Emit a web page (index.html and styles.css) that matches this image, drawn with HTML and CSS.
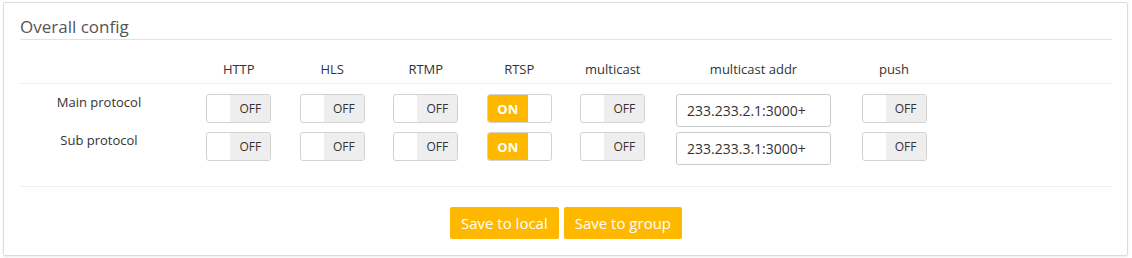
FILE: index.html
```
<html lang="en">
<head>
    <meta charset="UTF-8">
    <title>Overall config</title>
    <link rel="stylesheet" href="styles.css">
</head>
<body>

	<section class="panel">
		<h2 class="title">Overall config</h2>

		<div class="grid head">
			<span></span>
			<span>HTTP</span>
			<span>HLS</span>
			<span>RTMP</span>
			<span>RTSP</span>
			<span>multicast</span>
			<span>multicast addr</span>
			<span>push</span>
		</div>

		<div class="rows">
			<div class="grid row">
				<span class="label">Main protocol</span>
				<span class="switch"><i></i><em>OFF</em></span>
				<span class="switch"><i></i><em>OFF</em></span>
				<span class="switch"><i></i><em>OFF</em></span>
				<span class="switch on"><em>ON</em><i></i></span>
				<span class="switch"><i></i><em>OFF</em></span>
				<input class="addr" type="text" value="233.233.2.1:3000+">
				<span class="switch"><i></i><em>OFF</em></span>
			</div>
			<div class="grid row">
				<span class="label">Sub protocol</span>
				<span class="switch"><i></i><em>OFF</em></span>
				<span class="switch"><i></i><em>OFF</em></span>
				<span class="switch"><i></i><em>OFF</em></span>
				<span class="switch on"><em>ON</em><i></i></span>
				<span class="switch"><i></i><em>OFF</em></span>
				<input class="addr" type="text" value="233.233.3.1:3000+">
				<span class="switch"><i></i><em>OFF</em></span>
			</div>
		</div>

		<div class="actions">
			<button class="btn">Save to local</button>
			<button class="btn">Save to group</button>
		</div>
	</section>

</body>
</html>
```

FILE: styles.css
```
html,body {
	margin:0;
	padding:0;
	background:#fff;
	font-family:"Open Sans","Noto Sans",sans-serif;
	color:#333;
}
.panel {
	margin:2px 4px 2px 3px;
	padding:12px 15px 16px 16px;
	border:1px solid #dcdcdc;
	border-radius:2px;
	box-shadow:0 1px 2px rgba(0,0,0,.08);
}
.title {
	margin:0;
	padding-bottom:0;
	font-size:17px;
	line-height:24px;
	font-weight:normal;
	color:#555;
	border-bottom:1px solid #e2e2e2;
}
.grid {
	display:grid;
	grid-template-columns:172px repeat(5, 93.5px) 188px 93px;
	justify-items:center;
}
.head {
	height:39px;
	align-items:end;
	padding-bottom:4px;
	border-bottom:1px solid #eee;
	font-size:13px;
	line-height:20px;
	color:#333;
}
.rows {
	padding:10px 0 16px;
	border-bottom:1px solid #eee;
}
.row {
	height:38px;
	align-items:start;
}
.label {
	padding-right:14px;
	font-size:13px;
	line-height:17px;
}
.switch {
	display:flex;
	width:65px;
	height:29px;
	box-sizing:border-box;
	border:1px solid #d2d2d2;
	border-radius:3px;
	overflow:hidden;
	background:#fff;
}
.switch i {
	flex:1;
}
.switch em {
	width:40px;
	font-style:normal;
	font-size:12px;
	line-height:28px;
	text-align:center;
	background:#eee;
	color:#333;
}
.switch.on em {
	background:#FFB800;
	color:#fff;
	font-weight:bold;
	font-size:13px;
}
.addr {
	width:155px;
	height:33px;
	box-sizing:border-box;
	padding:0 0 0 10px;
	border:1px solid #ccc;
	border-radius:3px;
	font-family:inherit;
	font-size:14px;
	color:#333;
	outline:none;
}
.actions {
	display:flex;
	justify-content:center;
	gap:5px;
	padding-top:20px;
}
.btn {
	height:32px;
	padding:0 11px;
	border:none;
	border-radius:2px;
	background:#FFB800;
	color:#fff;
	font-family:inherit;
	font-size:15px;
	cursor:pointer;
}
```
